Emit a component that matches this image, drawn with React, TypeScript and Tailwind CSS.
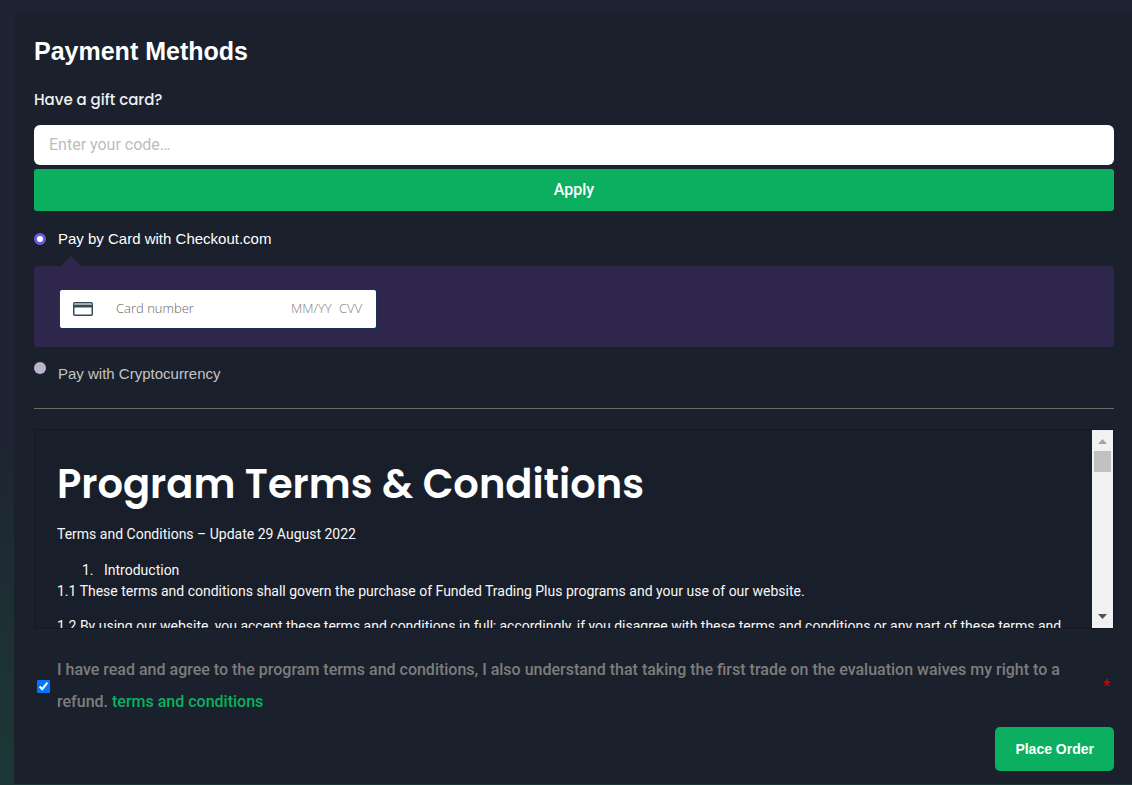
import React from "react"

type Method = "card" | "crypto"

const CardIcon = () => (
  <svg className="w-5 h-[14px] shrink-0" viewBox="0 0 20 14" fill="none" aria-hidden="true">
    <rect x="0.75" y="0.75" width="18.5" height="12.5" rx="1" fill="#fff" stroke="#364a54" strokeWidth="1.5" />
    <rect x="1.5" y="1.5" width="17" height="1.5" fill="#9fb0b4" />
    <rect x="1" y="3" width="18" height="2.5" fill="#364a54" />
  </svg>
)

const Scrollbar = () => (
  <div className="w-[21px] shrink-0 bg-[#f1f1f1] flex flex-col items-center" aria-hidden="true">
    <svg className="w-[21px] h-[21px]" viewBox="0 0 21 21">
      <path d="M6 14h9l-4.5-5z" fill="#a3a3a3" />
    </svg>
    <div className="w-[17px] h-[21px] bg-[#c1c1c1]" />
    <svg className="w-[21px] h-[21px] mt-auto" viewBox="0 0 21 21">
      <path d="M6 7h9l-4.5 5z" fill="#505050" />
    </svg>
  </div>
)

const radio = "appearance-none w-3 h-3 shrink-0 rounded-full bg-[#b9b5cc] checked:bg-white checked:border-[3px] checked:border-[#6b5ce7]"

export default function App() {
  const [method, setMethod] = React.useState<Method>("card")
  const [agreed, setAgreed] = React.useState(true)

  return (
    <div className="min-h-screen pt-[13px] pl-[14px] bg-[#1e2432] bg-[linear-gradient(to_bottom,#1e2432_55%,#1c3735_96%)] font-[Roboto,sans-serif]">
      <form
        className="rounded-tl pt-5 pl-5 pr-[18px] pb-[13px] bg-[#1a212c]"
        onSubmit={e => e.preventDefault()}
      >
        <h1 className="text-[25px] leading-9 font-bold text-white font-['Liberation_Sans',Arial,sans-serif]">
          Payment Methods
        </h1>

        {/* Gift card */}
        <label
          htmlFor="gift-code"
          className="block mt-[19px] text-[15px] leading-6 font-medium text-[#f0f0f0] font-[Poppins,Inter,sans-serif]"
        >
          Have a gift card?
        </label>
        <input
          id="gift-code"
          type="text"
          placeholder="Enter your code…"
          className="block mt-[13px] w-full h-10 px-[15px] pb-0.5 rounded-md bg-white text-base text-gray-800 placeholder:text-[#bdbdbd]"
        />
        <button type="button" className="block mt-1 w-full h-[42px] rounded-[3px] bg-[#0caf60] text-base font-medium text-white">
          Apply
        </button>

        {/* Payment methods */}
        <div className="flex items-center mt-4 font-['Liberation_Sans',Arial,sans-serif]">
          <input
            id="pay-card"
            type="radio"
            name="method"
            checked={method === "card"}
            onChange={() => setMethod("card")}
            className={radio}
          />
          <label htmlFor="pay-card" className="pl-3 text-[15px] leading-6 text-white">
            Pay by Card with Checkout.com
          </label>
        </div>

        <div className="relative mt-[15px] pt-6 pb-[19px] px-[26px] rounded bg-[#2f274b]">
          <svg className="absolute left-[27px] -top-[10px] w-5 h-[10px]" viewBox="0 0 20 10" aria-hidden="true">
            <path d="M0 10L10 0l10 10z" fill="#2f274b" />
          </svg>
          <div className="flex items-center w-[316px] max-w-full h-[38px] pl-[13px] pr-3 rounded-xs bg-white ring-1 ring-[#13395e]/70 text-[13px] font-light font-['Open_Sans',sans-serif]">
            <CardIcon />
            <input
              aria-label="Card number"
              placeholder="Card number"
              className="flex-1 min-w-0 ml-[23px] placeholder:text-[#666666]"
            />
            <input aria-label="Expiry date" placeholder="MM/YY" className="w-12 placeholder:text-[#7d7d7d]" />
            <input aria-label="CVV" placeholder="CVV" className="w-[25px] placeholder:text-[#7d7d7d]" />
          </div>
        </div>

        <div className="flex items-start mt-[15px] font-['Liberation_Sans',Arial,sans-serif]">
          <input
            id="pay-crypto"
            type="radio"
            name="method"
            checked={method === "crypto"}
            onChange={() => setMethod("crypto")}
            className={radio}
          />
          <label htmlFor="pay-crypto" className="pl-3 text-[15px] leading-6 text-[#c4c4c4]">
            Pay with Cryptocurrency
          </label>
        </div>

        <hr className="mt-[22px] border-[#6a6965]" />

        {/* Terms */}
        <div className="flex h-[200px] mt-5 border border-[#131924] bg-[#191f2a]">
          <div
            tabIndex={0}
            className="flex-1 min-w-0 px-[22px] overflow-y-auto [scrollbar-width:none] text-sm leading-[21px] text-[#f8f8f8]"
          >
            <h2 className="mt-[30px] text-[40px] leading-12 font-semibold text-white font-[Poppins,Inter,sans-serif]">
              Program Terms &amp; Conditions
            </h2>
            <p className="mt-4">Terms and Conditions – Update 29 August 2022</p>
            <ol className="mt-[15px] pl-10 list-decimal">
              <li className="pl-[7px]">Introduction</li>
            </ol>
            <p>
              1.1 These terms and conditions shall govern the purchase of Funded Trading Plus programs and your use of
              our website.
            </p>
            <p className="mt-[14px]">
              1.2 By using our website, you accept these terms and conditions in full; accordingly, if you disagree with
              these terms and conditions or any part of these terms and conditions, you must not use our website.
            </p>
          </div>
          <Scrollbar />
        </div>

        <div className="flex items-center mt-[25px]">
          <input
            id="agree"
            type="checkbox"
            checked={agreed}
            onChange={() => setAgreed(!agreed)}
            className="w-[13px] h-[13px] ml-[3px] shrink-0 accent-[#0075ff]"
          />
          <label htmlFor="agree" className="flex-1 pl-[7px] pr-10 text-base leading-8 font-medium text-[#7d7d7d]">
            I have read and agree to the program terms and conditions, I also understand that taking the first trade on
            the evaluation waives my right to a refund.{" "}
            <a href="#terms" className="text-[#0caf60]">
              terms and conditions
            </a>
          </label>
          <span className="pr-1 text-base leading-6 text-[#e00000]">*</span>
        </div>

        <div className="flex justify-end mt-[9px]">
          <button
            type="submit"
            className="h-11 px-5 rounded-[5px] bg-[#0caf60] text-sm font-bold text-white font-['Liberation_Sans',Arial,sans-serif]"
          >
            Place Order
          </button>
        </div>
      </form>
    </div>
  )
}
